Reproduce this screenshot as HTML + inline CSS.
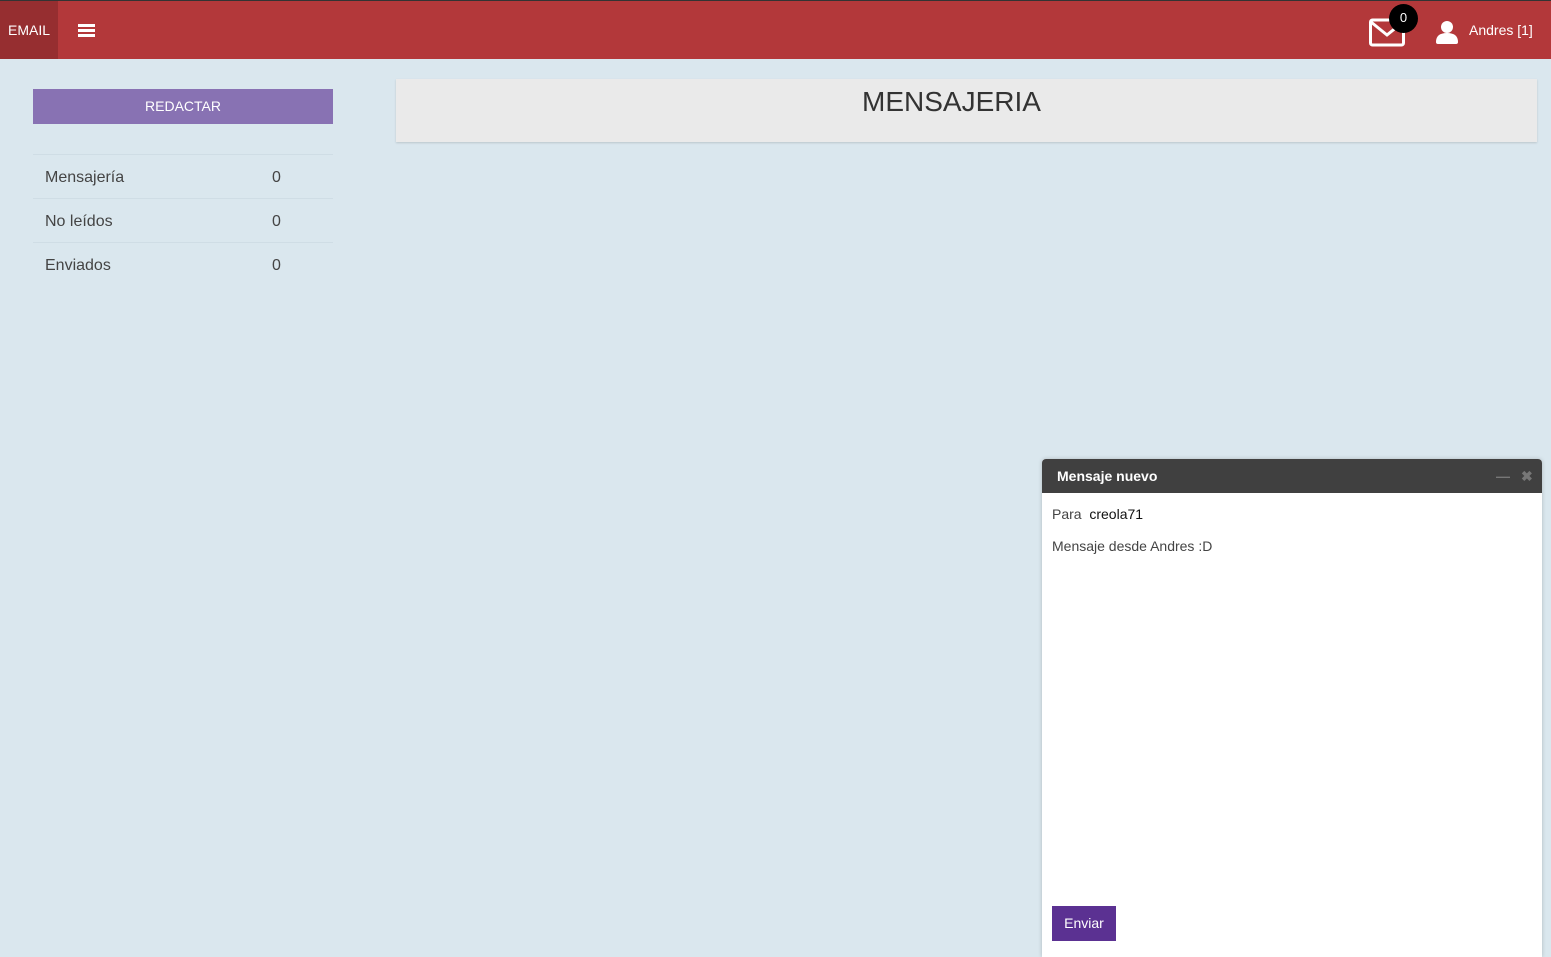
<!DOCTYPE html>
<html><head><meta charset="utf-8"><style>
*{box-sizing:border-box;margin:0;padding:0}
body{width:1551px;height:957px;overflow:hidden;background:#dae7ee;font-family:"Liberation Sans",sans-serif;position:relative;color:#444}
.top{position:absolute;left:0;top:0;width:1551px;height:59px;background:#b3383a;border-top:1px solid #333}
.brand{position:absolute;left:0;top:0;width:58px;height:58px;background:#962e30;color:#fff;font-size:14px;line-height:58px;text-align:center}
.burger{position:absolute;left:78px;top:23px;width:17px}
.burger i{display:block;height:3px;background:#fff;margin-bottom:2px}
.user{position:absolute;left:1469px;top:21px;color:#fff;font-size:14px}
.badge{position:absolute;left:1389px;top:3px;width:29px;height:29px;border-radius:50%;background:#000;color:#fff;font-size:13px;text-align:center;line-height:28px}
.btn{position:absolute;left:33px;top:89px;width:300px;height:35px;background:#8872b3;color:#fff;font-size:14px;text-align:center;line-height:34px}
.list{position:absolute;left:33px;top:154px;width:300px}
.list div{height:44px;border-top:1px solid #cfdde5;font-size:16px;line-height:45px;padding-left:12px;position:relative;color:#444}
.list span{position:absolute;left:239px}
.head{position:absolute;left:396px;top:79px;width:1141px;height:63px;background:#eaeaea;box-shadow:0 1px 2px rgba(0,0,0,.15);text-align:center;font-size:28px;color:#333;padding-top:7px;padding-right:30px}
.win{position:absolute;left:1042px;top:459px;width:500px;height:498px;background:#fff;border-radius:4px 4px 0 0;box-shadow:0 0 4px rgba(0,0,0,.2)}
.wh{height:34px;background:#404040;border-radius:4px 4px 0 0;color:#fff;font-weight:bold;font-size:14px;line-height:34px;padding-left:15px;position:relative}
.wh .c{position:absolute;color:#777;font-size:14px;top:0}
.para{position:absolute;left:10px;top:47px;font-size:14px;color:#444}
.para b{font-weight:normal;color:#111}
.msg{position:absolute;left:10px;top:79px;font-size:14px;color:#444}
.send{position:absolute;left:10px;top:447px;width:64px;height:35px;background:#5b3192;color:#fff;font-size:14px;text-align:center;line-height:34px}
</style></head><body>
<div class="top">
<div class="brand">EMAIL</div>
<div class="burger"><i></i><i></i><i></i></div>
<svg style="position:absolute;left:1369px;top:16px" width="36" height="30" viewBox="0 0 36 30"><rect x="1.5" y="3" width="33" height="25" rx="2" fill="none" stroke="#fff" stroke-width="3"/><path d="M2 5 L18 18 L34 5" fill="none" stroke="#fff" stroke-width="3"/></svg>
<div class="badge">0</div>
<svg style="position:absolute;left:1436px;top:19px" width="22" height="24" viewBox="0 0 22 24"><circle cx="11" cy="7" r="6" fill="#fff"/><path d="M0 22 Q0 13 11 13 Q22 13 22 22 Q22 24 20 24 L2 24 Q0 24 0 22Z" fill="#fff"/></svg>
<div class="user">Andres [1]</div>
</div>
<div class="btn">REDACTAR</div>
<div class="list"><div>Mensajería<span>0</span></div><div>No leídos<span>0</span></div><div>Enviados<span>0</span></div></div>
<div class="head">MENSAJERIA</div>
<div class="win">
<div class="wh">Mensaje nuevo<span class="c" style="left:454px">—</span><span class="c" style="left:479px">✖</span></div>
<div class="para">Para&nbsp; <b>creola71</b></div>
<div class="msg">Mensaje desde Andres :D</div>
<div class="send">Enviar</div>
</div>
</body></html>
